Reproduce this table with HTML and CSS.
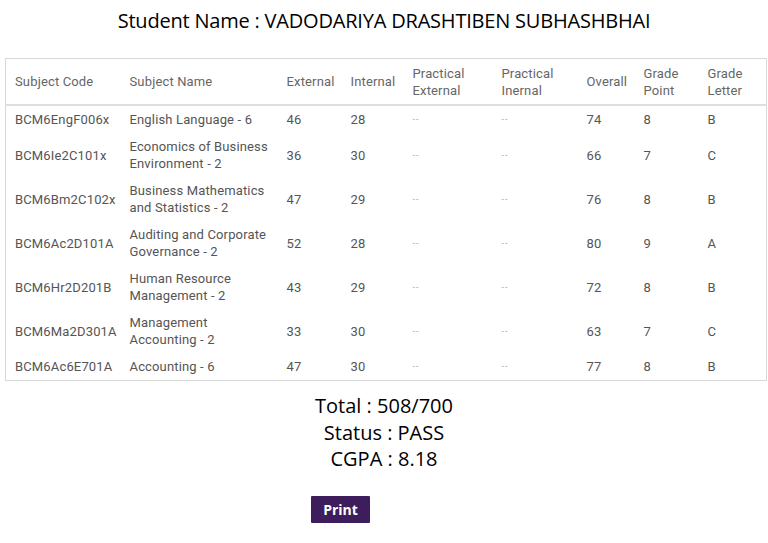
FILE: index.html
```html
<!DOCTYPE html>
<html>
<head>
<meta charset="utf-8">
<link rel="stylesheet" href="styles.css">
</head>
<body>
<h1 class="title">Student Name : VADODARIYA DRASHTIBEN SUBHASHBHAI</h1>
<table class="marks">
  <colgroup>
    <col class="c1"><col class="c2"><col class="c3"><col class="c4"><col class="c5"><col class="c6"><col class="c7"><col class="c8"><col class="c9">
  </colgroup>
  <thead>
    <tr>
      <th>Subject Code</th><th>Subject Name</th><th>External</th><th>Internal</th><th>Practical<br>External</th><th>Practical<br>Inernal</th><th>Overall</th><th>Grade<br>Point</th><th>Grade<br>Letter</th>
    </tr>
  </thead>
  <tbody>
    <tr><td>BCM6EngF006x</td><td>English Language - 6</td><td>46</td><td>28</td><td class="dash">--</td><td class="dash">--</td><td>74</td><td>8</td><td>B</td></tr>
    <tr><td>BCM6Ie2C101x</td><td>Economics of Business<br>Environment - 2</td><td>36</td><td>30</td><td class="dash">--</td><td class="dash">--</td><td>66</td><td>7</td><td>C</td></tr>
    <tr><td>BCM6Bm2C102x</td><td>Business Mathematics<br>and Statistics - 2</td><td>47</td><td>29</td><td class="dash">--</td><td class="dash">--</td><td>76</td><td>8</td><td>B</td></tr>
    <tr><td>BCM6Ac2D101A</td><td>Auditing and Corporate<br>Governance - 2</td><td>52</td><td>28</td><td class="dash">--</td><td class="dash">--</td><td>80</td><td>9</td><td>A</td></tr>
    <tr><td>BCM6Hr2D201B</td><td>Human Resource<br>Management - 2</td><td>43</td><td>29</td><td class="dash">--</td><td class="dash">--</td><td>72</td><td>8</td><td>B</td></tr>
    <tr><td>BCM6Ma2D301A</td><td>Management<br>Accounting - 2</td><td>33</td><td>30</td><td class="dash">--</td><td class="dash">--</td><td>63</td><td>7</td><td>C</td></tr>
    <tr><td>BCM6Ac6E701A</td><td>Accounting - 6</td><td>47</td><td>30</td><td class="dash">--</td><td class="dash">--</td><td>77</td><td>8</td><td>B</td></tr>
  </tbody>
</table>
<div class="summary">
  <p>Total : 508/700</p>
  <p>Status : PASS</p>
  <p>CGPA : 8.18</p>
</div>
<div class="actions">
  <button class="print">Print</button>
</div>
</body>
</html>
```
FILE: styles.css
```css
html, body {
  margin: 0;
  padding: 0;
  background: #ffffff;
}
body {
  font-family: "Open Sans", "Noto Sans", sans-serif;
  color: #111;
}
.title {
  margin: 0;
  padding-top: 8px;
  height: 58px;
  box-sizing: border-box;
  text-align: center;
  font-size: 20px;
  font-weight: 500;
  letter-spacing: -0.2px;
  line-height: 26px;
  color: #000;
}
.marks {
  margin-left: 5px;
  margin-top: 0;
  width: 761px;
  border-collapse: collapse;
  table-layout: fixed;
  border: 1px solid #d8d8d8;
  font-family: Roboto, "Liberation Sans", sans-serif;
  font-size: 13px;
  letter-spacing: 0.15px;
  color: #555;
}
.c1 { width: 115px; }
.c2 { width: 157px; }
.c3 { width: 64px; }
.c4 { width: 62px; }
.c5 { width: 89px; }
.c6 { width: 85px; }
.c7 { width: 57px; }
.c8 { width: 64px; }
.c9 { width: 68px; }
.marks th, .marks td {
  padding: 5px 0 5px 9px;
  text-align: left;
  vertical-align: middle;
  line-height: 17px;
  white-space: nowrap;
}
.marks th {
  font-weight: 400;
  color: #666;
  border-bottom: 2px solid #dedede;
  height: 35px;
}
.marks td.dash {
  color: #aaa;
  font-size: 9px;
  letter-spacing: 1px;
}
.summary {
  margin-top: 12px;
  text-align: center;
  font-size: 20px;
  font-weight: 400;
  line-height: 26.5px;
  color: #000;
}
.summary p {
  margin: 0;
}
.actions {
  padding-left: 311px;
  margin-top: 23px;
}
.print {
  background: #3d1d5c;
  color: #fff;
  border: none;
  border-radius: 1px;
  font-family: "Open Sans", "Noto Sans", sans-serif;
  font-weight: 700;
  font-size: 14px;
  width: 59px;
  height: 27px;
  padding: 0;
  cursor: pointer;
}
```
